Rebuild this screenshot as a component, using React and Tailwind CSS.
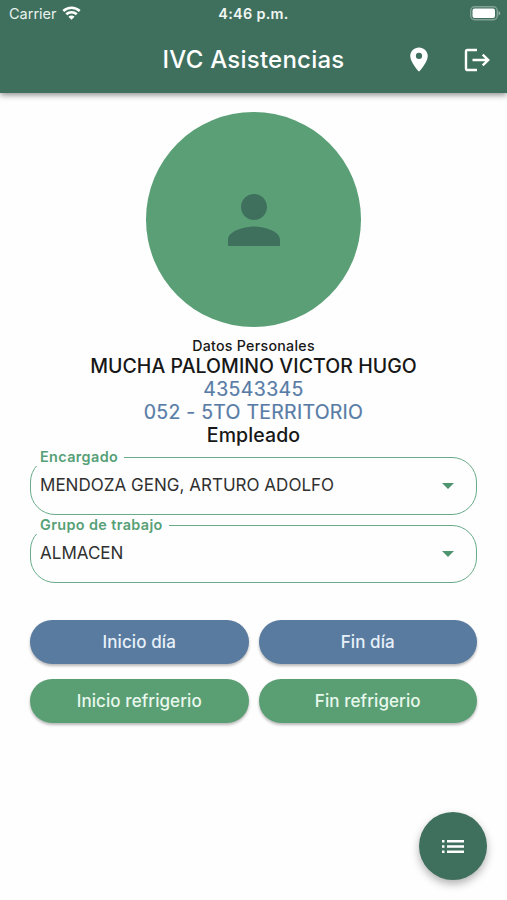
import React from "react";

function WifiIcon() {
  return (
    <svg viewBox="0 0 20 15" className="mb-[1px] h-[14px] w-[19px]" fill="none" stroke="#fff" strokeWidth="2.8">
      <path d="M1.2 5.3C6.2.7 13.8.7 18.8 5.3" />
      <path d="M4.4 8.8C7.6 5.9 12.4 5.9 15.6 8.8" />
      <path d="M10 14.6 6.7 11.4C8.5 9.8 11.5 9.8 13.3 11.4Z" fill="#fff" stroke="none" />
    </svg>
  );
}

function BatteryIcon() {
  return (
    <svg viewBox="0 0 31 15" className="mb-[1px] h-[15px] w-[31px]">
      <rect x="0.7" y="0.7" width="26.6" height="13" rx="4" fill="none" stroke="#fff" strokeOpacity="0.35" strokeWidth="1.4" />
      <rect x="2.5" y="2.5" width="22.5" height="9.5" rx="2" fill="#fff" />
      <path d="M28.5 5v4.5c1.2-.5 1.7-1.3 1.7-2.25S29.7 5.5 28.5 5Z" fill="#fff" fillOpacity="0.45" />
    </svg>
  );
}

function SelectField({ label, value }) {
  return (
    <fieldset className="h-[67px] w-full min-w-0 rounded-[25px] border-[1.5px] border-[#68ab88]">
      <legend className="ml-[5px] h-[18px] pl-[4px] pr-[6px] text-[14.4px] leading-[17px] font-semibold tracking-[0.38px] text-[#56a077]">
        {label}
      </legend>
      <div className="mt-[9px] flex h-[20px] items-center justify-between pl-[9px] pr-[22px]">
        <span className="text-[17px] leading-[20px] tracking-[0.02px] text-[#303030]">{value}</span>
        <svg viewBox="0 0 12 6" className="mt-[2px] h-[6px] w-[12px]" fill="#4d946f">
          <path d="M0 0h12L6 6Z" />
        </svg>
      </div>
    </fieldset>
  );
}

function ActionButton({ children, color }) {
  return (
    <button
      className={`h-[44px] rounded-full pt-[2px] text-[17px] font-medium tracking-[0.08px] shadow-[0_2px_3px_rgba(0,0,0,0.28)] ${color}`}
    >
      {children}
    </button>
  );
}

export default function App() {
  return (
    <div className="relative flex h-[900px] w-[507px] flex-col overflow-hidden bg-[#fefefe] font-['Inter',sans-serif]">
      <header className="flex h-[93px] shrink-0 flex-col bg-[#3f705e] text-white shadow-[0_2px_6px_rgba(0,0,0,0.45)]">
        <div className="grid h-[27px] grid-cols-[1fr_180px_1fr] items-center pl-[9px] pr-[6px]">
          <div className="flex items-center gap-[5px] text-[14.5px] text-[#e9f2ed]">
            <span>Carrier</span>
            <WifiIcon />
          </div>
          <div className="pr-[3px] text-center text-[14.4px] font-semibold tracking-[0.3px] text-[#f0f7f3]">4:46 p.m.</div>
          <div className="flex justify-end">
            <BatteryIcon />
          </div>
        </div>
        <div className="flex h-[65px] items-center">
          <h1 className="ml-[133px] w-[241px] text-center text-[24px] font-medium tracking-[0.23px]">IVC Asistencias</h1>
          <svg viewBox="0 0 24 24" className="ml-[30px] h-[29px] w-[30px] shrink-0" fill="#fff" preserveAspectRatio="none">
            <path d="M12 2C8.13 2 5 5.13 5 9c0 5.25 7 13 7 13s7-7.75 7-13c0-3.87-3.13-7-7-7zm0 9.500a2.5 2.5 0 1 1 0-5 2.5 2.5 0 0 1 0 5z" />
          </svg>
          <svg viewBox="0 0 26 24" className="ml-[30px] h-[24px] w-[26px] shrink-0" fill="none" stroke="#fff" strokeWidth="2.4">
            <path d="M13 2H3.6Q2 2 2 3.6V20.4Q2 22 3.6 22H13" />
            <path d="M8.5 12H24M18.7 6.6 24.2 12l-5.5 5.4" />
          </svg>
        </div>
      </header>

      <main className="flex flex-col px-[30px] pt-[19px]">
        <div className="flex h-[215px] w-[215px] items-center justify-center self-center rounded-full bg-[#5a9f76]">
          <svg viewBox="0 0 24 24" className="h-[78px] w-[78px]" fill="#3f705e">
            <path d="M12 12c2.21 0 4-1.79 4-4s-1.79-4-4-4-4 1.79-4 4 1.79 4 4 4zm0 2c-2.67 0-8 1.34-8 4v2h16v-2c0-2.66-5.33-4-8-4z" />
          </svg>
        </div>
        <div className="mt-[10px] flex flex-col items-center whitespace-nowrap text-[#171717]">
          <p className="text-[14.2px] leading-[18px] font-medium tracking-[0.28px]">Datos Personales</p>
          <p className="text-[19.5px] leading-[23px] font-medium tracking-[0.06px]">MUCHA PALOMINO VICTOR HUGO</p>
          <p className="text-[19.5px] leading-[23px] tracking-[0.38px] text-[#587ca6] [-webkit-text-stroke:0.2px_#587ca6]">43543345</p>
          <p className="text-[19.5px] leading-[23px] tracking-[0.25px] text-[#587ca6] [-webkit-text-stroke:0.2px_#587ca6]">052 - 5TO TERRITORIO</p>
          <p className="text-[19.5px] leading-[23px] font-medium tracking-[0.1px]">Empleado</p>
        </div>
        <div className="mt-[1px] flex flex-col gap-[1px]">
          <SelectField label="Encargado" value="MENDOZA GENG, ARTURO ADOLFO" />
          <SelectField label="Grupo de trabajo" value="ALMACEN" />
        </div>
        <div className="mt-[37px] grid grid-cols-2 gap-x-[10px] gap-y-[15px]">
          <ActionButton color="bg-[#587b9f] text-[#e8f1fa]">Inicio día</ActionButton>
          <ActionButton color="bg-[#587b9f] text-[#e8f1fa]">Fin día</ActionButton>
          <ActionButton color="bg-[#5a9f74] text-[#e8f8ec]">Inicio refrigerio</ActionButton>
          <ActionButton color="bg-[#5a9f74] text-[#e8f8ec]">Fin refrigerio</ActionButton>
        </div>
      </main>

      <button className="absolute left-[419px] top-[812px] flex h-[68px] w-[68px] items-center justify-center rounded-full bg-[#3f705e] shadow-[0_4px_8px_rgba(0,0,0,0.3)]">
        <svg viewBox="0 0 22 13" className="h-[13px] w-[22px]" fill="#fff">
          <path d="M0 0h2.500v2.500H0zM5 0h17v2.500H5zM0 5.250h2.500v2.500H0zM5 5.250h17v2.500H5zM0 10.500h2.500V13H0zM5 10.500h17V13H5z" />
        </svg>
      </button>
    </div>
  );
}
